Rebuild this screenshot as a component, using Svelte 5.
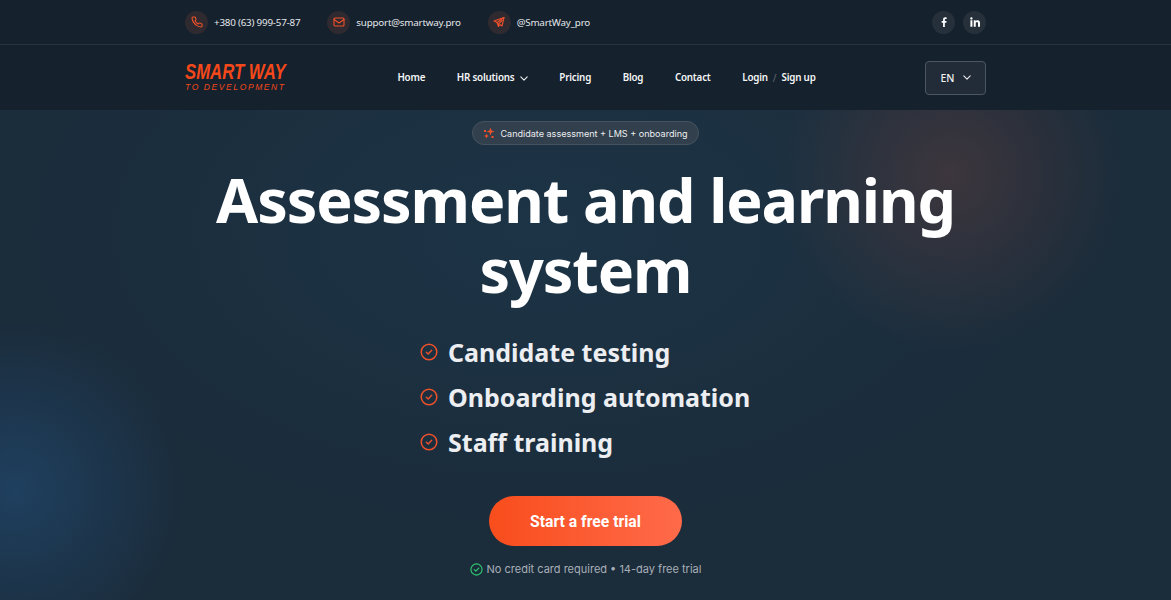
<script lang="ts">
  const contacts = [
    { text: "+380 (63) 999-57-87", icon: "phone" },
    { text: "support@smartway.pro", icon: "mail" },
    { text: "@SmartWay_pro", icon: "send" }
  ];
  const links = ["Home", "HR solutions", "Pricing", "Blog", "Contact"];
  const benefits = ["Candidate testing", "Onboarding automation", "Staff training"];
</script>

<div class="page">
  <header class="topbar">
    <div class="container topbar-inner">
      <div class="contacts">
        {#each contacts as c}
          <a class="contact" href="#top">
            <span class="contact-icon">
              {#if c.icon === "phone"}
                <svg width="12" height="12" viewBox="0 0 24 24" fill="none" stroke="currentColor" stroke-width="2.200" stroke-linecap="round" stroke-linejoin="round">
                  <path d="M22 16.9v3a2 2 0 0 1-2.200 2 19.800 19.800 0 0 1-8.600-3.100 19.500 19.500 0 0 1-6-6A19.800 19.800 0 0 1 2.100 4.200 2 2 0 0 1 4.100 2h3a2 2 0 0 1 2 1.700c.1 1 .4 1.900.7 2.800a2 2 0 0 1-.5 2.100L8.100 9.900a16 16 0 0 0 6 6l1.300-1.300a2 2 0 0 1 2.100-.4c.9.3 1.800.5 2.800.7a2 2 0 0 1 1.700 2z" />
                </svg>
              {:else if c.icon === "mail"}
                <svg width="12" height="12" viewBox="0 0 24 24" fill="none" stroke="currentColor" stroke-width="2.200" stroke-linecap="round" stroke-linejoin="round">
                  <rect x="2" y="4" width="20" height="16" rx="2" />
                  <path d="M2 7l10 7 10-7" />
                </svg>
              {:else}
                <svg width="12" height="12" viewBox="0 0 24 24" fill="none" stroke="currentColor" stroke-width="2.200" stroke-linejoin="round" stroke-linecap="round">
                  <path d="M22 3L2 10l6 3 3 8 3-4 4 3z" />
                  <path d="M22 3L8 13" />
                  <path d="M11 21v-5l7-7" />
                </svg>
              {/if}
            </span>
            <span>{c.text}</span>
          </a>
        {/each}
      </div>
      <div class="socials">
        <a class="social" href="#top" aria-label="Facebook">
          <svg width="10" height="10" viewBox="0 0 24 24" fill="currentColor"><path d="M14 24V13.500h3.500l.6-4.200H14V6.700c0-1.200.4-2 2.100-2h2.200V1c-.4-.1-1.700-.2-3.200-.2-3.200 0-5.300 1.900-5.300 5.400v3.100H6.300v4.200h3.500V24z" /></svg>
        </a>
        <a class="social" href="#top" aria-label="LinkedIn">
          <svg width="10" height="10" viewBox="0 0 24 24" fill="currentColor"><path d="M1 8h4.800v15.500H1zM3.400.6a2.800 2.800 0 1 1 0 5.600 2.800 2.800 0 0 1 0-5.600zM9 8h4.600v2.100h.1c.6-1.200 2.200-2.500 4.500-2.500 4.900 0 5.800 3.200 5.800 7.400v8.500h-4.800v-7.500c0-1.800 0-4.100-2.500-4.100s-2.900 2-2.900 4v7.600H9z" /></svg>
        </a>
      </div>
    </div>
  </header>

  <nav class="navbar">
    <div class="container navbar-inner">
      <a class="logo" href="#top">
        <span class="logo-main">SMART WAY</span>
        <span class="logo-sub">TO DEVELOPMENT</span>
      </a>
      <div class="links">
        {#each links as link}
          <a class="link" href="#top">
            {link}
            {#if link === "HR solutions"}
              <svg class="chevron" width="8" height="5" viewBox="0 0 10 6" fill="none" stroke="currentColor" stroke-width="1.300" stroke-linecap="round" stroke-linejoin="round"><path d="M1 1l4 4 4-4" /></svg>
            {/if}
          </a>
        {/each}
        <span class="auth">
          <a class="link" href="#top">Login</a>
          <span class="slash">/</span>
          <a class="link" href="#top">Sign up</a>
        </span>
      </div>
      <button class="lang">
        EN
        <svg width="8" height="5" viewBox="0 0 10 6" fill="none" stroke="currentColor" stroke-width="1.300" stroke-linecap="round" stroke-linejoin="round"><path d="M1 1l4 4 4-4" /></svg>
      </button>
    </div>
  </nav>

  <main class="hero">
    <div class="badge">
      <svg width="12" height="12" viewBox="0 0 24 24" fill="#f0512b">
        <path d="M15 1l2 6 6 2-6 2-2 6-2-6-6-2 6-2z" />
        <path d="M7 13l1.500 3.500L12 18l-3.500 1.500L7 23l-1.500-3.500L2 18l3.500-1.500z" />
        <rect x="2" y="6" width="4" height="4" />
        <rect x="17" y="18" width="4" height="4" />
      </svg>
      Candidate assessment + LMS + onboarding
    </div>
    <h1>Assessment and learning<br />system</h1>
    <ul class="benefits">
      {#each benefits as b}
        <li>
          <svg width="18" height="18" viewBox="0 0 18 18" fill="none" stroke="#f0512b" stroke-linecap="round" stroke-linejoin="round">
            <circle cx="9" cy="9" r="7.800" stroke-width="1.500" />
            <path d="M6.300 9.200l1.900 1.700 3.500-3.600" stroke-width="1.400" />
          </svg>
          {b}
        </li>
      {/each}
    </ul>
    <a class="cta" href="#top">Start a free trial</a>
    <p class="note">
      <svg width="13" height="13" viewBox="0 0 14 14" fill="none" stroke="#2ecc71" stroke-linecap="round" stroke-linejoin="round">
        <circle cx="7" cy="7" r="6" stroke-width="1.200" />
        <path d="M4.500 7.200l1.800 1.600 3.200-3.400" stroke-width="1.200" />
      </svg>
      No credit card required • 14-day free trial
    </p>
  </main>
</div>

<style>
  :global(body) {
    background: #15212d;
  }

  .page {
    height: 600px;
    overflow: hidden;
    display: flex;
    flex-direction: column;
    font-family: "Noto Sans", sans-serif;
    color: #fff;
  }

  a {
    color: inherit;
    text-decoration: none;
  }

  .container {
    width: 801px;
    margin: 0 auto;
    display: flex;
    align-items: center;
    justify-content: space-between;
  }

  .topbar {
    background: #15212d;
    border-bottom: 1px solid #27333e;
  }

  .topbar-inner {
    height: 44px;
  }

  .contacts {
    display: flex;
    gap: 27px;
  }

  .contact {
    display: flex;
    align-items: center;
    gap: 6px;
    font-size: 9.800px;
    letter-spacing: -0.200px;
    color: #e4e7ea;
  }

  .contact-icon {
    width: 23px;
    height: 23px;
    border-radius: 50%;
    background: #2e2a2f;
    color: #f0512b;
    display: flex;
    align-items: center;
    justify-content: center;
  }

  .socials {
    display: flex;
    gap: 8px;
  }

  .social {
    width: 23px;
    height: 23px;
    border-radius: 50%;
    background: #25303b;
    display: flex;
    align-items: center;
    justify-content: center;
  }

  .navbar {
    background: #15212d;
  }

  .navbar-inner {
    height: 65px;
  }

  .logo {
    width: 103px;
    display: flex;
    flex-direction: column;
    gap: 2px;
    color: #f4481a;
    font-family: "Liberation Sans", sans-serif;
    font-weight: 700;
    font-style: italic;
    white-space: nowrap;
  }

  .logo-main {
    font-size: 22px;
    line-height: 18px;
    transform: scaleX(0.76);
    transform-origin: left center;
  }

  .logo-sub {
    font-size: 8.500px;
    line-height: 9px;
    letter-spacing: 1.600px;
    font-weight: 400;
  }

  .links {
    display: flex;
    align-items: center;
    gap: 31.600px;
  }

  .link {
    font-size: 9.800px;
    font-weight: 600;
    letter-spacing: -0.200px;
    white-space: nowrap;
    color: #f4f5f6;
  }

  .chevron {
    margin-left: 3px;
  }

  .auth {
    display: flex;
    align-items: center;
    gap: 5px;
  }

  .slash {
    font-size: 10px;
    color: #5d6873;
  }

  .lang {
    width: 61px;
    height: 34px;
    display: flex;
    align-items: center;
    justify-content: center;
    gap: 8px;
    background: #212c38;
    border: 1px solid #4a5661;
    border-radius: 4px;
    color: #f0f1f3;
    font-family: inherit;
    font-size: 10.500px;
    font-weight: 500;
  }

  .hero {
    flex: 1;
    display: flex;
    flex-direction: column;
    align-items: center;
    padding-top: 11px;
    background:
      radial-gradient(circle 175px at 950px 65px, rgba(120, 68, 60, 0.36), rgba(120, 68, 60, 0) 100%),
      radial-gradient(circle 170px at 15px 380px, rgba(34, 80, 125, 0.55), rgba(34, 80, 125, 0) 100%),
      radial-gradient(ellipse 520px 300px at 540px 120px, #1c3446, rgba(28, 52, 70, 0) 100%),
      #1b2c3b;
  }

  .badge {
    height: 22px;
    display: flex;
    align-items: center;
    gap: 5px;
    padding: 0 10px;
    border-radius: 12px;
    border: 1px solid #46535f;
    background: #323f4c;
    font-family: Inter, sans-serif;
    font-size: 9.060px;
    color: #eceef0;
  }

  h1 {
    margin: 20px 0 0;
    font-size: 61px;
    line-height: 70px;
    letter-spacing: -1.100px;
    font-weight: 700;
    text-align: center;
    color: #fff;
  }

  .benefits {
    list-style: none;
    margin: 27px 0 0;
    padding: 0;
    width: 331px;
    display: flex;
    flex-direction: column;
    gap: 5px;
  }

  .benefits li {
    height: 40px;
    display: flex;
    align-items: center;
    gap: 10px;
    font-size: 25px;
    font-weight: 700;
    white-space: nowrap;
    color: #eceef1;
  }

  .cta {
    margin-top: 34px;
    width: 193px;
    height: 50px;
    display: flex;
    align-items: center;
    justify-content: center;
    border-radius: 25px;
    background: linear-gradient(90deg, #f94d1c, #ff6a4a);
    font-family: Roboto, sans-serif;
    font-size: 15.700px;
    font-weight: 700;
    color: #fff;
  }

  .note {
    margin: 16px 0 0;
    display: flex;
    align-items: center;
    gap: 4px;
    font-family: Inter, sans-serif;
    font-size: 11px;
    color: #a9b0b8;
  }
</style>
